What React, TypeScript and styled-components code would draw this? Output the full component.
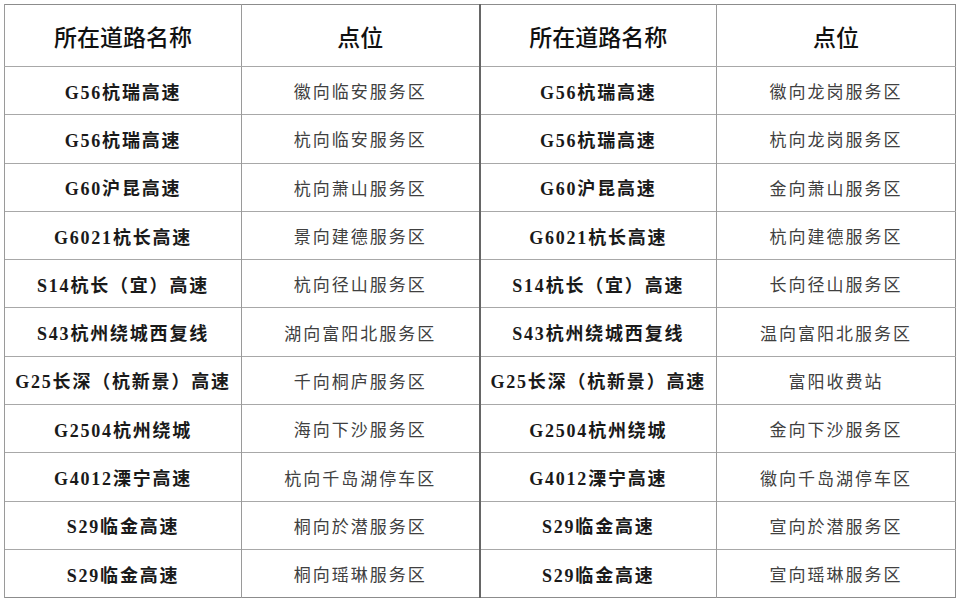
import styled, { createGlobalStyle } from "styled-components";

const GlobalStyle = createGlobalStyle`
  html, body {
    margin: 0;
    padding: 0;
    background: #ffffff;
  }
`;

const Page = styled.div`
  padding: 4px 0 0 4px;
  width: 960px;
  height: 604px;
  box-sizing: border-box;
  background: #fff;
`;

const Table = styled.table`
  width: 951px;
  border-collapse: collapse;
  table-layout: fixed;
  border: 1px solid #8c8c8c;
  font-family: "Noto Sans CJK SC", sans-serif;
`;

const HeadCell = styled.th<{ $split?: boolean }>`
  height: 61px;
  padding: 0;
  font-size: 23px;
  font-weight: 500;
  color: #111;
  text-align: center;
  vertical-align: middle;
  border-bottom: 1px solid #a8a8a8;
  border-left: ${(p) => (p.$split ? "2px solid #666" : "1px solid #9a9a9a")};
`;

const Row = styled.tr`
  height: 48.3px;
`;

const RoadCell = styled.td<{ $split?: boolean }>`
  padding: 0;
  text-align: center;
  vertical-align: middle;
  font-family: "Liberation Serif", "Noto Sans CJK SC", serif;
  font-weight: 600;
  font-size: 18px;
  letter-spacing: 1.8px;
  color: #1a1a1a;
  white-space: nowrap;
  border-top: 1px solid #a8a8a8;
  border-left: ${(p) => (p.$split ? "2px solid #666" : "1px solid #9a9a9a")};
`;

const SpotCell = styled.td`
  padding: 0;
  text-align: center;
  vertical-align: middle;
  font-size: 17px;
  font-weight: 400;
  letter-spacing: 2px;
  color: #404040;
  white-space: nowrap;
  border-top: 1px solid #a8a8a8;
  border-left: 1px solid #9a9a9a;
`;

type Entry = { road: string; left: string; right: string };

const entries: Entry[] = [
  { road: "G56杭瑞高速", left: "徽向临安服务区", right: "徽向龙岗服务区" },
  { road: "G56杭瑞高速", left: "杭向临安服务区", right: "杭向龙岗服务区" },
  { road: "G60沪昆高速", left: "杭向萧山服务区", right: "金向萧山服务区" },
  { road: "G6021杭长高速", left: "景向建德服务区", right: "杭向建德服务区" },
  { road: "S14杭长（宜）高速", left: "杭向径山服务区", right: "长向径山服务区" },
  { road: "S43杭州绕城西复线", left: "湖向富阳北服务区", right: "温向富阳北服务区" },
  { road: "G25长深（杭新景）高速", left: "千向桐庐服务区", right: "富阳收费站" },
  { road: "G2504杭州绕城", left: "海向下沙服务区", right: "金向下沙服务区" },
  { road: "G4012溧宁高速", left: "杭向千岛湖停车区", right: "徽向千岛湖停车区" },
  { road: "S29临金高速", left: "桐向於潜服务区", right: "宣向於潜服务区" },
  { road: "S29临金高速", left: "桐向瑶琳服务区", right: "宣向瑶琳服务区" },
];

export default function App() {
  return (
    <Page>
      <GlobalStyle />
      <Table>
        <colgroup>
          <col style={{ width: "237px" }} />
          <col style={{ width: "238px" }} />
          <col style={{ width: "237px" }} />
          <col style={{ width: "239px" }} />
        </colgroup>
        <thead>
          <tr>
            <HeadCell>所在道路名称</HeadCell>
            <HeadCell>点位</HeadCell>
            <HeadCell $split>所在道路名称</HeadCell>
            <HeadCell>点位</HeadCell>
          </tr>
        </thead>
        <tbody>
          {entries.map((e, i) => (
            <Row key={i}>
              <RoadCell>{e.road}</RoadCell>
              <SpotCell>{e.left}</SpotCell>
              <RoadCell $split>{e.road}</RoadCell>
              <SpotCell>{e.right}</SpotCell>
            </Row>
          ))}
        </tbody>
      </Table>
    </Page>
  );
}
